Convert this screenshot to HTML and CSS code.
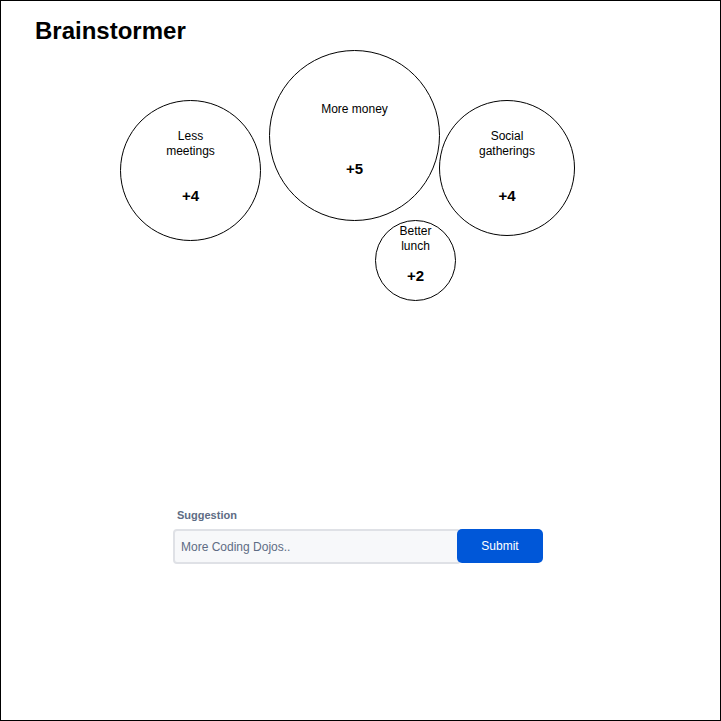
FILE: index.html
```html
<!DOCTYPE html>
<html lang="en">
<head>
<meta charset="utf-8">
<title>Brainstormer</title>
<link rel="stylesheet" href="styles.css">
</head>
<body>
<main class="app">
  <h1 class="title">Brainstormer</h1>
  <section class="canvas" aria-label="Ideas">
    <article class="bubble less-meetings">
      <p class="idea">Less<br>meetings</p>
      <p class="votes">+4</p>
    </article>
    <article class="bubble more-money">
      <p class="idea">More money</p>
      <p class="votes">+5</p>
    </article>
    <article class="bubble social">
      <p class="idea">Social<br>gatherings</p>
      <p class="votes">+4</p>
    </article>
    <article class="bubble lunch">
      <p class="idea">Better<br>lunch</p>
      <p class="votes">+2</p>
    </article>
  </section>
  <form class="suggest">
    <label class="suggest-label" for="suggestion">Suggestion</label>
    <div class="suggest-row">
      <input class="suggest-input" id="suggestion" type="text" value="More Coding Dojos..">
      <button class="suggest-button" type="button">Submit</button>
    </div>
  </form>
</main>
</body>
</html>
```
FILE: styles.css
```css
* {
  box-sizing: border-box;
}

body {
  margin: 0;
  background: #fff;
  color: #000;
  font: 12px/15px "Liberation Sans", Arial, sans-serif;
}

.app {
  min-height: 100vh;
  border: 1px solid #000;
}

.title {
  margin: 0;
  padding: 16px 34px 0;
  font-size: 24px;
  line-height: 28px;
}

/* Free canvas: each bubble has its own place and size */
.canvas {
  position: relative;
  height: 463px;
}

.bubble {
  position: absolute;
  display: flex;
  flex-direction: column;
  align-items: center;
  gap: 28px;
  border: 1px solid #000;
  border-radius: 50%;
  text-align: center;
}

.less-meetings {
  left: 119px;
  top: 55px;
  width: 141px;
  height: 141px;
  padding-top: 28px;
}

.more-money {
  left: 268px;
  top: 5px;
  width: 171px;
  height: 171px;
  padding-top: 51px;
}

.social {
  left: 438px;
  top: 55px;
  width: 136px;
  height: 136px;
  padding-top: 28px;
}

.lunch {
  left: 374px;
  top: 175px;
  width: 81px;
  height: 81px;
  gap: 13px;
  padding-top: 3px;
}

.idea {
  min-height: 30px;
  margin: 0;
}

.votes {
  margin: 0;
  font-size: 15px;
  font-weight: bold;
  line-height: 18px;
}

.suggest {
  max-width: 375px;
  margin: 0 auto;
  padding-right: 5px;
}

.suggest-label {
  display: block;
  padding: 0 4px 6px;
  color: #5e6c84;
  font-size: 11px;
  font-weight: bold;
}

.suggest-row {
  display: flex;
}

.suggest-input {
  flex: 1;
  min-width: 0;
  height: 35px;
  margin-right: -4px;
  padding: 0 6px;
  border: 2px solid #dfe1e6;
  border-radius: 4px;
  background: #f7f8fa;
  color: #5e6c84;
  font: inherit;
}

.suggest-button {
  z-index: 1;
  width: 86px;
  height: 34px;
  padding: 0;
  border: 0;
  border-radius: 5px;
  background: #0057d8;
  color: #fff;
  font: inherit;
}
```
